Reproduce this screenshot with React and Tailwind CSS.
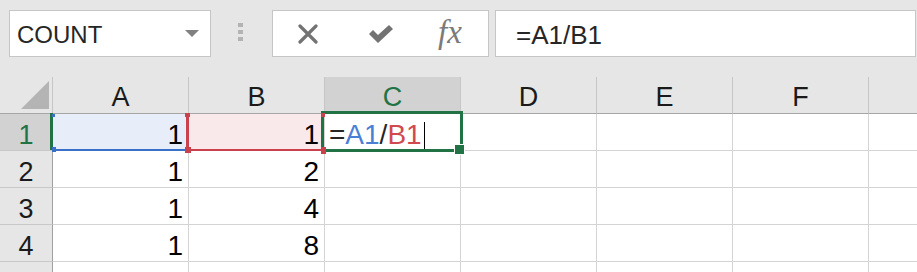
import React from 'react';

const cols = ['A', 'B', 'C', 'D', 'E', 'F'];
const rows = [
  [1, 1],
  [1, 2],
  [1, 4],
  [1, 8],
];

const font = { fontFamily: '"Liberation Sans", Arial, sans-serif' };

const App = () => {
  return (
    <div className="w-[917px] h-[272px] overflow-hidden bg-[#e6e6e6]" style={font}>
      {/* formula bar */}
      <div className="h-[77px] flex items-start pt-[10px] pl-[9px]">
        <div className="w-[202px] h-[47px] bg-white border border-[#c6c6c6] flex items-center justify-between pl-[7px] pr-[11px]">
          <span className="text-[24px] text-[#262626] leading-none pt-[2px]">COUNT</span>
          <svg width="14" height="7" viewBox="0 0 14 7">
            <path d="M0 0 L14 0 L7 7 Z" fill="#808080" />
          </svg>
        </div>
        <div className="ml-[27px] mt-[13px] flex flex-col gap-[3px]">
          <div className="w-[5px] h-[4px] bg-[#b3b3b3]" />
          <div className="w-[5px] h-[4px] bg-[#b3b3b3]" />
          <div className="w-[5px] h-[4px] bg-[#b3b3b3]" />
        </div>
        <div className="ml-[29px] w-[217px] h-[47px] bg-white border border-[#c6c6c6] flex items-center pl-[24px]">
          <svg width="22" height="20" viewBox="0 0 22 20">
            <path d="M3 2 L19 18 M19 2 L3 18" stroke="#737373" strokeWidth="3.2" strokeLinecap="round" />
          </svg>
          <svg className="ml-[49px]" width="26" height="20" viewBox="0 0 26 20">
            <path d="M1 10 L5 6 L10 11 L21 1 L25 5 L10 19 Z" fill="#737373" />
          </svg>
          <span
            className="ml-[44px] text-[33px] italic text-[#7a7a7a] leading-none pb-[2px]"
            style={{ fontFamily: '"Liberation Serif", "Times New Roman", serif' }}
          >
            fx
          </span>
        </div>
        <div className="ml-[6px] flex-1 mr-[1px] h-[47px] bg-white border border-[#c6c6c6] flex items-center pl-[20px]">
          <span className="text-[26px] text-[#262626] leading-none pt-[2px]">=A1/B1</span>
        </div>
      </div>

      {/* sheet */}
      <div className="relative">
        <div className="grid grid-cols-[53px_repeat(6,136px)_1fr]">
          {/* header row */}
          <div className="h-[37px] border-r border-b border-r-[#c6c6c6] border-b-[#a6a6a6] bg-[#e6e6e6] relative">
            <svg className="absolute left-0 top-0" width="52" height="36" viewBox="0 0 52 36">
              <path d="M21 32 L49 4 L49 32 Z" fill="#b4b4b4" />
            </svg>
          </div>
          {cols.map((c) => (
            <div
              key={c}
              className={
                c === 'C'
                  ? 'h-[37px] border-r border-b border-r-[#c6c6c6] border-b-[#217346] bg-[#d2d2d2] text-[#217346] flex justify-center items-center pt-[5px] text-[27px]'
                  : 'h-[37px] border-r border-b border-r-[#c6c6c6] border-b-[#a6a6a6] bg-[#e6e6e6] text-[#1a1a1a] flex justify-center items-center pt-[5px] text-[27px]'
              }
            >
              {c}
            </div>
          ))}
          <div className="h-[37px] border-b border-b-[#a6a6a6] bg-[#e6e6e6]" />

          {/* rows */}
          {[0, 1, 2, 3, 4].map((r) => (
            <React.Fragment key={r}>
              <div
                className={
                  r === 0
                    ? 'h-[37px] border-r border-b border-r-[#a0a0a0] border-b-[#c8c8c8] bg-[#d2d2d2] text-[#217346] flex justify-center items-center pt-[6px] text-[27px]'
                    : 'h-[37px] border-r border-b border-r-[#a0a0a0] border-b-[#c8c8c8] bg-[#e6e6e6] text-[#1a1a1a] flex justify-center items-center pt-[6px] text-[27px]'
                }
              >
                {r < 4 ? r + 1 : ''}
              </div>
              {cols.map((c, i) => {
                let bg = 'bg-white';
                if (r === 0 && i === 0) bg = 'bg-[#e8eef9]';
                if (r === 0 && i === 1) bg = 'bg-[#f9e9ea]';
                const val = r < 4 && i < 2 ? rows[r][i] : '';
                return (
                  <div
                    key={c}
                    className={`h-[37px] border-r border-b border-[#d4d4d4] ${bg} flex items-center justify-end pr-[5px] pt-[6px] text-[28px] text-black`}
                  >
                    {r === 0 && i === 2 ? (
                      <div className="w-full flex items-center pl-[4px]">
                        <span className="text-[#262626]">=</span>
                        <span className="text-[#4a7fd6]">A1</span>
                        <span className="text-[#262626]">/</span>
                        <span className="text-[#d0494f]">B1</span>
                        <span className="ml-[2px] w-[1px] h-[27px] bg-black" />
                      </div>
                    ) : (
                      val
                    )}
                  </div>
                );
              })}
              <div className="h-[37px] border-b border-[#d4d4d4] bg-white" />
            </React.Fragment>
          ))}
        </div>

        {/* row header highlight */}
        <div className="absolute left-[50px] top-[36px] w-[3px] h-[37px] bg-[#217346]" />

        {/* A1 reference (blue) */}
        <div className="absolute left-[53px] top-[72px] w-[134px] h-[2px] bg-[#3a6fc8]" />
        <div className="absolute left-[52px] top-[37px] w-[3px] h-[3px] bg-[#3a6fc8]" />
        <div className="absolute left-[52px] top-[70px] w-[4px] h-[5px] bg-[#3a6fc8]" />

        {/* B1 reference (red) */}
        <div className="absolute left-[186px] top-[36px] w-[3px] h-[38px] bg-[#c9414a]" />
        <div className="absolute left-[186px] top-[72px] w-[137px] h-[2px] bg-[#c9414a]" />
        <div className="absolute left-[185px] top-[36px] w-[5px] h-[4px] bg-[#c9414a]" />
        <div className="absolute left-[185px] top-[70px] w-[6px] h-[6px] bg-[#c9414a]" />

        {/* C1 active cell */}
        <div className="absolute left-[321px] top-[34px] w-[142px] h-[41px] border-[3px] border-[#217346]" />
        <div className="absolute left-[321px] top-[36px] w-[4px] h-[4px] bg-[#c9414a]" />
        <div className="absolute left-[321px] top-[70px] w-[5px] h-[7px] bg-[#c9414a]" />
        <div className="absolute left-[454px] top-[67px] w-[11px] h-[11px] bg-[#217346] border border-white" />
      </div>
    </div>
  );
};

export default App;
